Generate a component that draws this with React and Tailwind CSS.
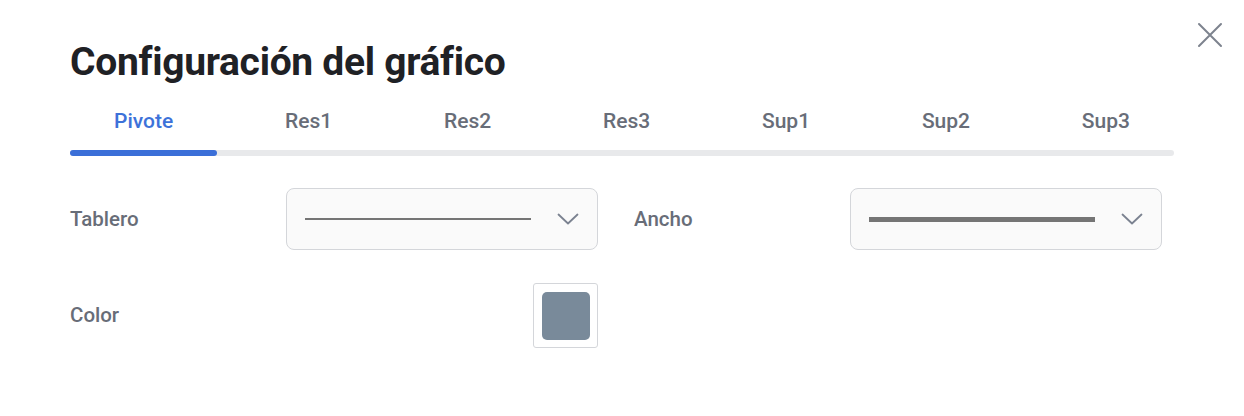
import React from 'react';

const tabs = ['Pivote', 'Res1', 'Res2', 'Res3', 'Sup1', 'Sup2', 'Sup3'];

const Chevron = () => (
  <svg width="22" height="12" viewBox="0 0 22 12" fill="none" stroke="#7b8290" strokeWidth="1.8" strokeLinecap="round" strokeLinejoin="round">
    <path d="M1.5 1.5 L11 10.5 L20.5 1.5" />
  </svg>
);

const LineSelect = ({ thickness }) => (
  <div className="flex h-[62px] w-[312px] items-center justify-between rounded-lg border border-[#d4d6da] bg-[#fafafa] pl-[18px] pr-[18px]">
    <div className={`w-[226px] bg-[#757575] ${thickness}`} />
    <Chevron />
  </div>
);

const App = () => {
  const active = 0;

  return (
    <div className="relative h-[416px] w-[1244px] bg-white font-['Roboto',sans-serif]">
      <button className="absolute right-[21px] top-[22px] text-[#7d838e]">
        <svg width="26" height="26" viewBox="0 0 26 26" fill="none" stroke="currentColor" strokeWidth="2" strokeLinecap="round">
          <path d="M2 2 L24 24 M24 2 L2 24" />
        </svg>
      </button>

      <div className="px-[70px] pt-[38px]">
        <h1 className="text-[39px] font-bold leading-[48px] tracking-[-0.3px] text-[#1f2125]">
          Configuración del gráfico
        </h1>

        <div className="mt-[22px]">
          <div className="flex justify-between">
            {tabs.map((t, i) => (
              <div
                key={t}
                className={`px-[44px] pb-[16px] text-[21px] font-medium leading-[26px] ${
                  i === active ? 'text-[#3d72d9]' : 'text-[#686d78]'
                }`}
              >
                {t}
              </div>
            ))}
          </div>
          <div className="relative h-[6px] rounded-full bg-[#e8e9eb]">
            <div className="absolute left-0 top-0 h-[6px] w-[147px] rounded-full bg-[#3b6fd8]" />
          </div>
        </div>

        <div className="mt-[32px] grid w-[1092px] grid-cols-2 gap-x-[36px] gap-y-[33px]">
          <div className="flex items-center">
            <span className="w-[216px] text-[20.5px] font-medium text-[#686d78]">Tablero</span>
            <LineSelect thickness="h-[2px]" />
          </div>
          <div className="flex items-center">
            <span className="w-[216px] text-[20.5px] font-medium text-[#686d78]">Ancho</span>
            <LineSelect thickness="h-[5px]" />
          </div>
          <div className="flex items-center">
            <span className="w-[216px] text-[20.5px] font-medium text-[#686d78]">Color</span>
            <div className="flex flex-1 justify-end">
              <div className="flex h-[65px] w-[65px] items-center justify-center rounded-[3px] border border-[#d4d6da] bg-white">
                <div className="h-[48px] w-[48px] rounded-[5px] bg-[#798a9a]" />
              </div>
            </div>
          </div>
        </div>
      </div>
    </div>
  );
};

export default App;
